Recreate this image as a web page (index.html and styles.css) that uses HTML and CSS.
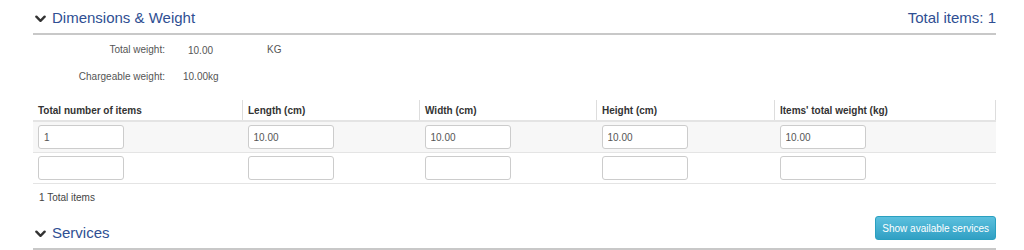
FILE: index.html
```html
<!DOCTYPE html>
<html>
<head>
<meta charset="utf-8">
<link rel="stylesheet" href="styles.css">
</head>
<body>
<div class="page">
  <div class="section-head">
    <h2 class="title"><svg class="chev" viewBox="0 0 12 8" width="11" height="8"><path d="M1.5 1.5 L6 6 L10.5 1.5" fill="none" stroke="#333" stroke-width="2.6" stroke-linecap="round" stroke-linejoin="round"/></svg>Dimensions &amp; Weight</h2>
    <span class="total">Total items: 1</span>
  </div>
  <div class="summary">
    <div class="srow">
      <span class="slabel">Total weight:</span>
      <span class="sval">10.00</span>
      <span class="sunit">KG</span>
    </div>
    <div class="srow">
      <span class="slabel">Chargeable weight:</span>
      <span class="sval sval2">10.00kg</span>
    </div>
  </div>
  <table class="grid">
    <thead>
      <tr>
        <th class="c1">Total number of items</th>
        <th class="c2">Length (cm)</th>
        <th class="c3">Width (cm)</th>
        <th class="c4">Height (cm)</th>
        <th class="c5">Items' total weight (kg)</th>
      </tr>
    </thead>
    <tbody>
      <tr class="odd">
        <td><input class="inp" value="1"></td>
        <td><input class="inp" value="10.00"></td>
        <td><input class="inp" value="10.00"></td>
        <td><input class="inp" value="10.00"></td>
        <td><input class="inp" value="10.00"></td>
      </tr>
      <tr>
        <td><input class="inp"></td>
        <td><input class="inp"></td>
        <td><input class="inp"></td>
        <td><input class="inp"></td>
        <td><input class="inp"></td>
      </tr>
    </tbody>
  </table>
  <div class="count">1 Total items</div>
  <div class="section-head services">
    <h2 class="title"><svg class="chev" viewBox="0 0 12 8" width="11" height="8"><path d="M1.5 1.5 L6 6 L10.5 1.5" fill="none" stroke="#333" stroke-width="2.6" stroke-linecap="round" stroke-linejoin="round"/></svg>Services</h2>
    <button class="btn">Show available services</button>
  </div>
</div>
</body>
</html>
```

FILE: styles.css
```css
html, body {
  margin: 0;
  padding: 0;
  background: #fff;
  font-family: "Liberation Sans", Arial, sans-serif;
  color: #333;
}
.page {
  width: 963px;
  margin-left: 33px;
}
.section-head {
  display: flex;
  justify-content: space-between;
  align-items: flex-end;
  height: 35px;
  border-bottom: 2px solid #c8c8c8;
  box-sizing: border-box;
  padding-bottom: 5px;
}
.title {
  margin: 0;
  font-weight: normal;
  font-size: 15px;
  color: #2f4f93;
  display: flex;
  align-items: center;
  line-height: 20px;
}
.chev {
  margin: 1px 6px 0 2px;
}
.total {
  font-size: 15px;
  color: #2f4f93;
  line-height: 20px;
}
.summary {
  padding-top: 8px;
  font-size: 10px;
  color: #555;
}
.srow {
  display: flex;
  height: 27px;
  align-items: flex-start;
  line-height: 14px;
}
.slabel {
  width: 132px;
  text-align: right;
}
.sval {
  margin-left: 23px;
  width: 79px;
  margin-top: 1px;
}
.sval2 {
  margin-left: 18px;
  margin-top: 0;
}
.grid {
  margin-top: 3px;
  width: 963px;
  border-collapse: collapse;
  font-size: 10px;
}
.grid th {
  text-align: left;
  font-weight: bold;
  color: #333;
  height: 20px;
  padding: 0 5px;
  border-right: 1px solid #ddd;
  border-bottom: 2px solid #e4e4e4;
  vertical-align: middle;
}
.grid .c1 { width: 199px; }
.grid .c2 { width: 166px; }
.grid .c3 { width: 166px; }
.grid .c4 { width: 167px; }
.grid td {
  padding: 3px 5px 3px;
  border-bottom: 1px solid #e4e4e4;
  height: 23px;
}
.grid tr.odd td {
  background: #f7f7f7;
}
.inp {
  display: block;
  box-sizing: border-box;
  width: 86px;
  height: 24px;
  border: 1px solid #ccc;
  border-radius: 3px;
  background: #fff;
  font-family: "Liberation Sans", Arial, sans-serif;
  font-size: 10px;
  color: #555;
  padding: 0 5px;
  margin: 0;
}
.count {
  font-size: 10px;
  color: #444;
  padding: 8px 0 0 6px;
  height: 14px;
}
.services {
  margin-top: 6px;
  height: 38px;
  padding-bottom: 5px;
}
.btn {
  font-family: "Liberation Sans", Arial, sans-serif;
  font-size: 10px;
  color: #fff;
  background: linear-gradient(#5bc0de, #31a0c4);
  border: 1px solid #2aa0c0;
  border-radius: 3px;
  height: 24px;
  padding: 0 6px;
  margin-bottom: 3px;
}
```
